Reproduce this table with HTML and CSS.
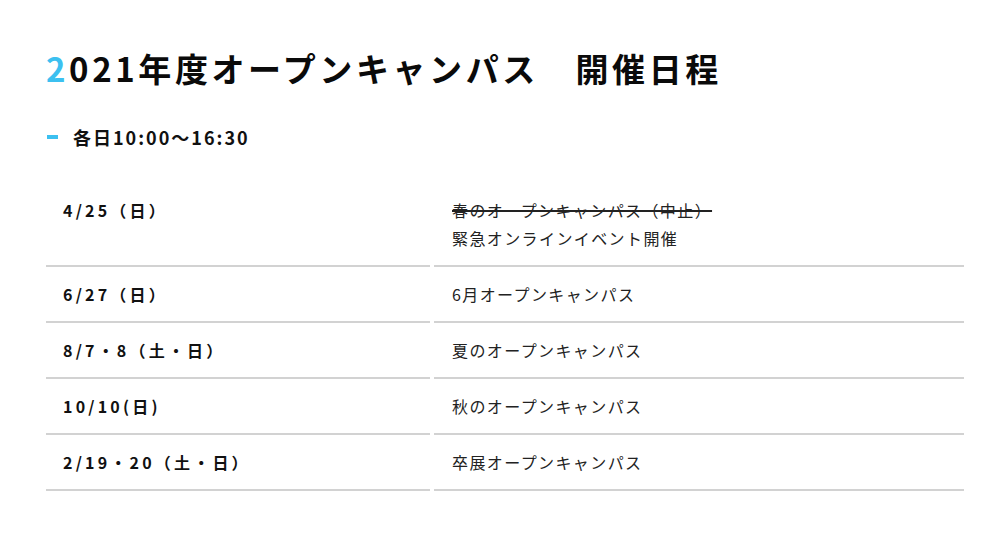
FILE: index.html
```html
<!DOCTYPE html>
<html lang="ja">
<head>
<meta charset="utf-8">
<title>2021年度オープンキャンパス 開催日程</title>
<link rel="stylesheet" href="styles.css">
</head>
<body>
<main class="page">
  <h1 class="title"><span class="accent">2</span>021年度オープンキャンパス　開催日程</h1>
  <p class="sub"><span class="dash"></span>各日10:00〜16:30</p>
  <div class="schedule">
    <div class="cell date">4/25（日）</div>
    <div class="cell event"><s>春のオープンキャンパス（中止）</s><br>緊急オンラインイベント開催</div>
    <div class="cell date">6/27（日）</div>
    <div class="cell event">6月オープンキャンパス</div>
    <div class="cell date">8/7・8（土・日）</div>
    <div class="cell event">夏のオープンキャンパス</div>
    <div class="cell date">10/10(日)</div>
    <div class="cell event">秋のオープンキャンパス</div>
    <div class="cell date">2/19・20（土・日）</div>
    <div class="cell event">卒展オープンキャンパス</div>
  </div>
</main>
</body>
</html>
```

FILE: styles.css
```css
html, body {
  margin: 0;
  padding: 0;
  background: #fff;
}
body {
  font-family: "Noto Sans CJK JP", "Noto Sans", sans-serif;
  color: #111;
}
.page {
  padding: 44px 36px 0 46px;
}
.title {
  margin: 0;
  font-size: 33px;
  font-weight: 700;
  line-height: 48px;
  letter-spacing: 3.6px;
  color: #0a0a0a;
}
.accent {
  color: #3cc0f0;
}
.sub {
  margin: 32px 0 0 0;
  display: flex;
  align-items: center;
  font-size: 18px;
  font-weight: 700;
  line-height: 26px;
  letter-spacing: 2px;
}
.dash {
  display: inline-block;
  width: 11px;
  height: 4px;
  background: #3cc0f0;
  margin: 0 15px 0 1px;
}
.schedule {
  margin-top: 33px;
  display: grid;
  grid-template-columns: 384px 530px;
  column-gap: 4px;
}
.cell {
  border-bottom: 2px solid #d2d2d2;
  padding: 13px 17px;
  font-size: 16px;
  line-height: 28px;
  letter-spacing: 1.4px;
}
.date {
  font-weight: 700;
  color: #111;
  letter-spacing: 3.2px;
}
.event {
  padding-left: 18px;
  color: #222;
}
.event s {
  text-decoration-thickness: 1.5px;
}
```
